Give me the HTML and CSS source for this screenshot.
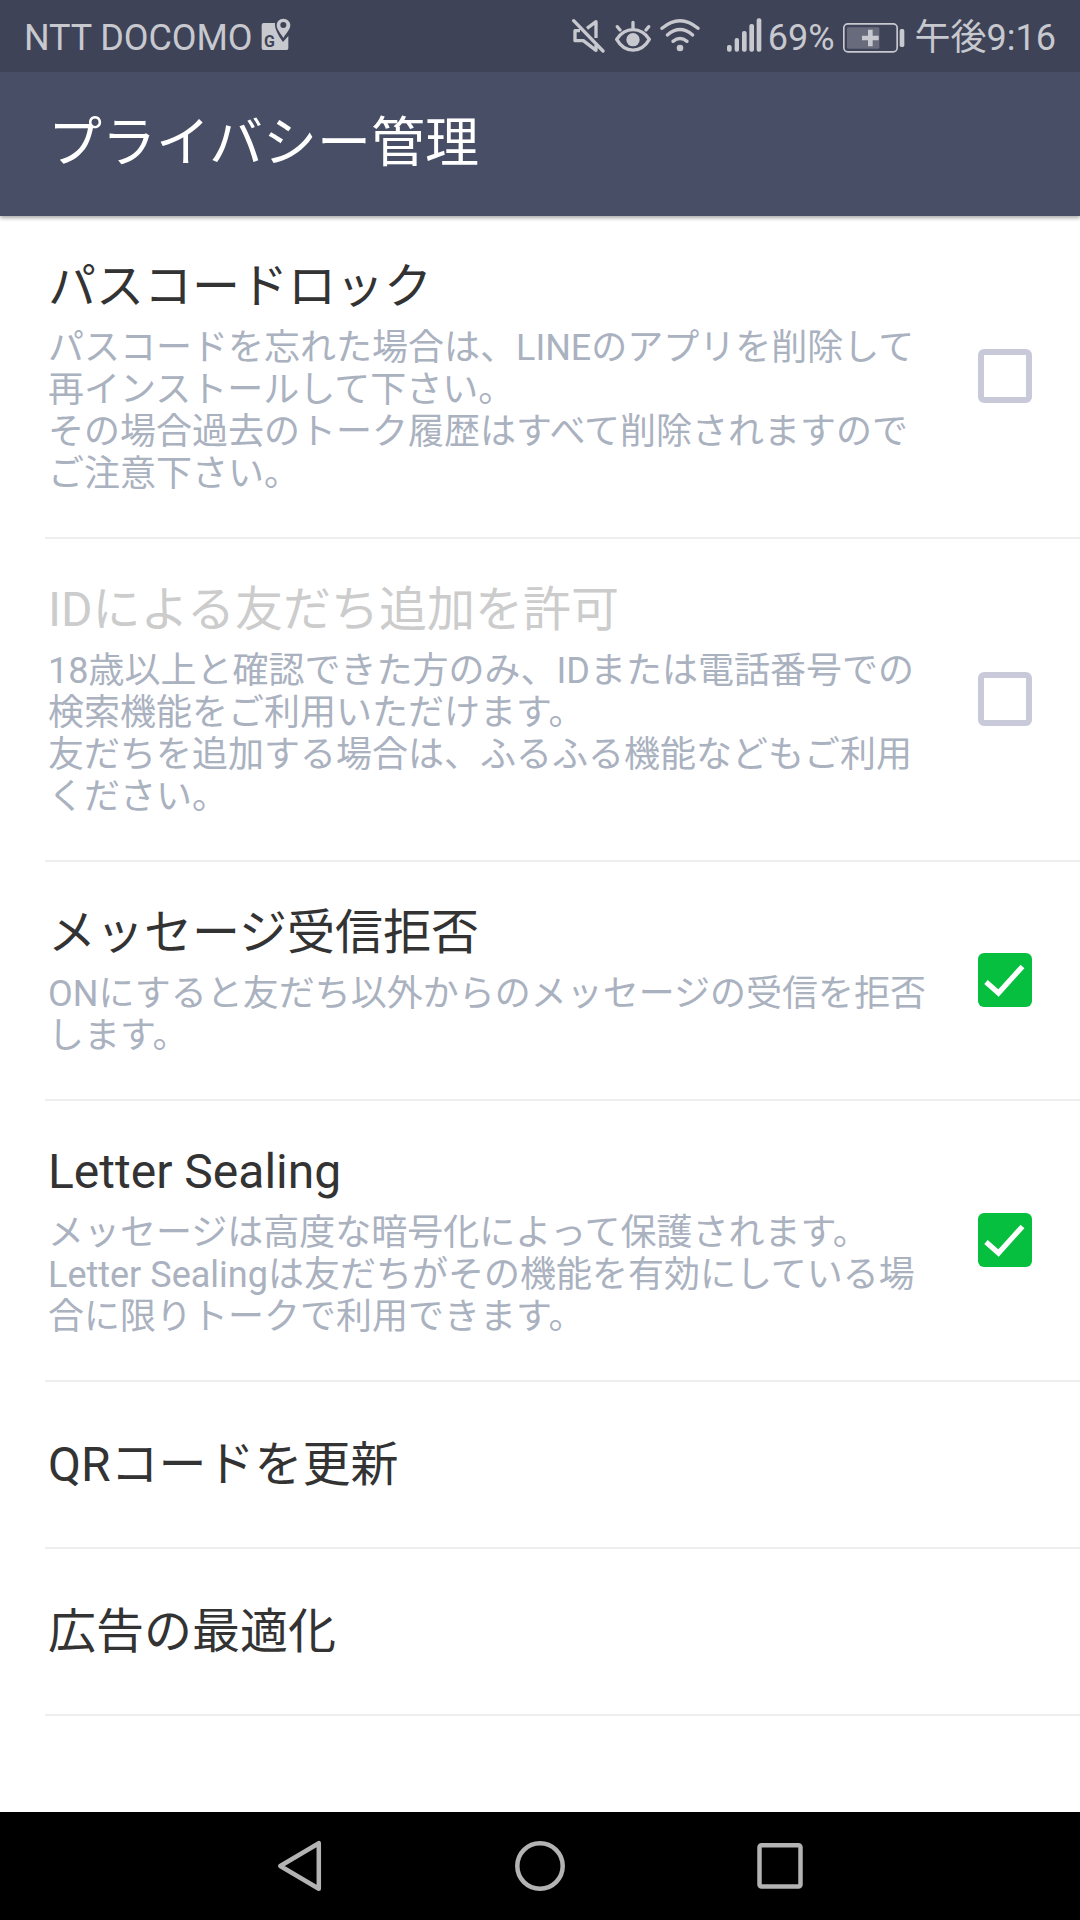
FILE: index.html
```html
<!DOCTYPE html>
<html lang="ja">
<head>
    <meta charset="UTF-8">
    <meta name="viewport" content="width=device-width, initial-scale=1.0">
    <title>プライバシー管理</title>
    <link rel="stylesheet" href="styles.css">
</head>
<body>
    <div class="status-bar">
        <span class="carrier">NTT DOCOMO</span>
        <svg class="icon-map" width="30" height="32" viewBox="0 0 90 96">
            <path fill="currentColor" d="M8 15H42C40 30 50 50 66 72L82 54V91Q82 96 77 96H8Q2 96 2 90V21Q2 15 8 15Z"/>
            <path fill="currentColor" fill-rule="evenodd" d="M67 2C55 2 47 11 47 22C47 35 60 47 67 60C74 47 88 35 88 22C88 11 79 2 67 2ZM67 12A9 9 0 1 1 67 30A9 9 0 1 1 67 12Z"/>
            <text class="map-letter" x="9" y="86">G</text>
        </svg>
        <div class="status-right">
            <svg class="icon-mute" width="34" height="36" viewBox="0 0 102 108">
                <g fill="none" stroke="currentColor" stroke-width="10" stroke-linejoin="round">
                    <path d="M8 8L96 99" stroke-linecap="round"/>
                    <path d="M48 31L75 11V60"/>
                    <path d="M27 38H12V68H37L75 97V80"/>
                </g>
            </svg>
            <svg class="icon-eye" width="36" height="36" viewBox="0 0 108 108">
                <g fill="none" stroke="currentColor" stroke-width="10" stroke-linecap="round">
                    <path d="M5 64C30 25 78 25 103 64C78 107 30 107 5 64Z" stroke-linejoin="round"/>
                    <path d="M54 32V13M15 36L7 26M93 36L101 26"/>
                </g>
                <circle cx="54" cy="65" r="20" fill="currentColor"/>
            </svg>
            <svg class="icon-wifi" width="40" height="36" viewBox="0 0 120 108">
                <g fill="none" stroke="currentColor" stroke-width="10" stroke-linecap="round">
                    <path d="M6 31Q60 -14 114 31"/>
                    <path d="M22 51Q60 18 98 51"/>
                    <path d="M39 70Q60 53 81 70"/>
                </g>
                <circle cx="60" cy="90" r="10" fill="currentColor"/>
            </svg>
            <svg class="icon-signal" width="35" height="34" viewBox="0 0 105 102">
                <g fill="currentColor">
                    <rect x="0" y="81" width="14" height="20" rx="6"/>
                    <rect x="23" y="60" width="13" height="41" rx="6"/>
                    <rect x="45" y="39" width="14" height="62" rx="6"/>
                    <rect x="67" y="18" width="14" height="83" rx="6"/>
                    <rect x="89" y="1" width="14" height="100" rx="6"/>
                </g>
            </svg>
            <span class="battery-level">69%</span>
            <svg class="icon-battery" width="62" height="30" viewBox="0 0 186 90">
                <rect x="2.5" y="2.5" width="160" height="84" rx="12" fill="none" stroke="currentColor" stroke-width="5"/>
                <rect x="12" y="13" width="97" height="64" rx="4" fill="currentColor" opacity=".3"/>
                <path d="M82 20V70M57 45H107" stroke="currentColor" stroke-width="14"/>
                <rect x="170" y="18" width="14" height="54" rx="5" fill="currentColor"/>
            </svg>
            <span class="clock">午後9:16</span>
        </div>
    </div>

    <header class="title-bar">
        <h1>プライバシー管理</h1>
    </header>

    <main class="settings">
        <label class="row">
            <span class="row-text">
                <span class="row-title">パスコードロック</span>
                <span class="row-desc">パスコードを忘れた場合は、LINEのアプリを削除して再インストールして下さい。<br>その場合過去のトーク履歴はすべて削除されますのでご注意下さい。</span>
            </span>
            <input class="checkbox" type="checkbox">
        </label>
        <label class="row disabled">
            <span class="row-text">
                <span class="row-title">IDによる友だち追加を許可</span>
                <span class="row-desc">18歳以上と確認できた方のみ、IDまたは電話番号での検索機能をご利用いただけます。<br>友だちを追加する場合は、ふるふる機能などもご利用ください。</span>
            </span>
            <input class="checkbox" type="checkbox" disabled>
        </label>
        <label class="row">
            <span class="row-text">
                <span class="row-title">メッセージ受信拒否</span>
                <span class="row-desc">ONにすると友だち以外からのメッセージの受信を拒否します。</span>
            </span>
            <span class="checkbox checked">
                <svg width="54" height="54" viewBox="0 0 54 54"><path d="M8 29L20.500 40L44.500 13.500" fill="none" stroke="#fff" stroke-width="5.200"/></svg>
            </span>
        </label>
        <label class="row">
            <span class="row-text">
                <span class="row-title">Letter Sealing</span>
                <span class="row-desc">メッセージは高度な暗号化によって保護されます。<br>Letter Sealingは友だちがその機能を有効にしている場合に限りトークで利用できます。</span>
            </span>
            <span class="checkbox checked">
                <svg width="54" height="54" viewBox="0 0 54 54"><path d="M8 29L20.500 40L44.500 13.500" fill="none" stroke="#fff" stroke-width="5.200"/></svg>
            </span>
        </label>
        <div class="row single">
            <span class="row-title">QRコードを更新</span>
        </div>
        <div class="row single">
            <span class="row-title">広告の最適化</span>
        </div>
    </main>

    <nav class="nav-bar">
        <svg width="54" height="54" viewBox="0 0 54 54"><path d="M7.300 27L45.800 4.200V49.800Z"/></svg>
        <svg width="54" height="54" viewBox="0 0 54 54"><circle cx="27" cy="27" r="22.700"/></svg>
        <svg width="54" height="54" viewBox="0 0 54 54"><rect x="6.500" y="6.200" width="41" height="41.300" rx="2"/></svg>
    </nav>
</body>
</html>
```
FILE: styles.css
```css
* {
    box-sizing: border-box;
}

body {
    margin: 0;
    height: 1920px;
    display: flex;
    flex-direction: column;
    background-color: #fff;
    color: #333;
    font-family: Roboto, "Noto Sans CJK JP", sans-serif;
    overflow: hidden;
}

svg {
    display: block;
    flex: none;
}

/* Status bar */
.status-bar {
    height: 72px;
    flex: none;
    display: flex;
    align-items: flex-start;
    padding: 0 24px;
    background-color: #3e4358;
    color: #c8c9cf;
    font-size: 36px;
    line-height: 76px;
    white-space: nowrap;
}

.carrier {
    letter-spacing: -0.1px;
}

.icon-map {
    margin: 18px 0 0 9px;
}

.map-letter {
    font-family: Roboto, sans-serif;
    font-size: 48px;
    font-weight: 700;
    fill: #3e4358;
}

.status-right {
    display: flex;
    margin-left: auto;
}

.icon-mute {
    margin-top: 18px;
}

.icon-eye {
    margin: 18px 0 0 10px;
}

.icon-wifi {
    margin: 18px 0 0 9px;
}

.icon-signal {
    margin: 18px 0 0 27px;
}

.battery-level {
    margin-left: 6px;
}

.icon-battery {
    margin: 23px 10px 0 8px;
}

/* Title bar */
.title-bar {
    height: 144px;
    flex: none;
    padding-left: 48px;
    background-color: #474e65;
    color: #fff;
    box-shadow: 0 2px 4px rgba(0, 0, 0, 0.35);
    clip-path: inset(0 0 -6px 0);
}

h1 {
    margin: 0;
    font-size: 54px;
    font-weight: 400;
    line-height: 144px;
}

/* Settings list */
.settings {
    flex: 1;
}

.row {
    display: flex;
    align-items: center;
    margin-left: 45px;
    padding: 43px 48px 42px 3px;
    border-bottom: 2px solid #eee;
}

.row-text {
    flex: 1;
    margin-right: 48px;
}

.row-title {
    display: block;
    font-size: 48px;
    line-height: 56px;
}

.row-desc {
    display: block;
    margin-top: 12px;
    font-size: 36px;
    line-height: 42px;
    color: #aab1bf;
}

.disabled .row-title {
    color: #ccc;
}

.single {
    height: 167px;
    padding-top: 0;
    padding-bottom: 0;
}

.checkbox {
    appearance: none;
    flex: none;
    width: 54px;
    height: 54px;
    margin: 0 0 2px;
    border: 6px solid #c8cad9;
    border-radius: 6px;
}

.checked {
    border: none;
    background-color: #07bf3f;
}

/* Navigation bar */
.nav-bar {
    height: 108px;
    flex: none;
    display: flex;
    align-items: center;
    justify-content: center;
    gap: 186px;
    background-color: #000;
}

.nav-bar svg {
    fill: none;
    stroke: #b3b3b3;
    stroke-width: 4.500;
    stroke-linejoin: round;
}
```
